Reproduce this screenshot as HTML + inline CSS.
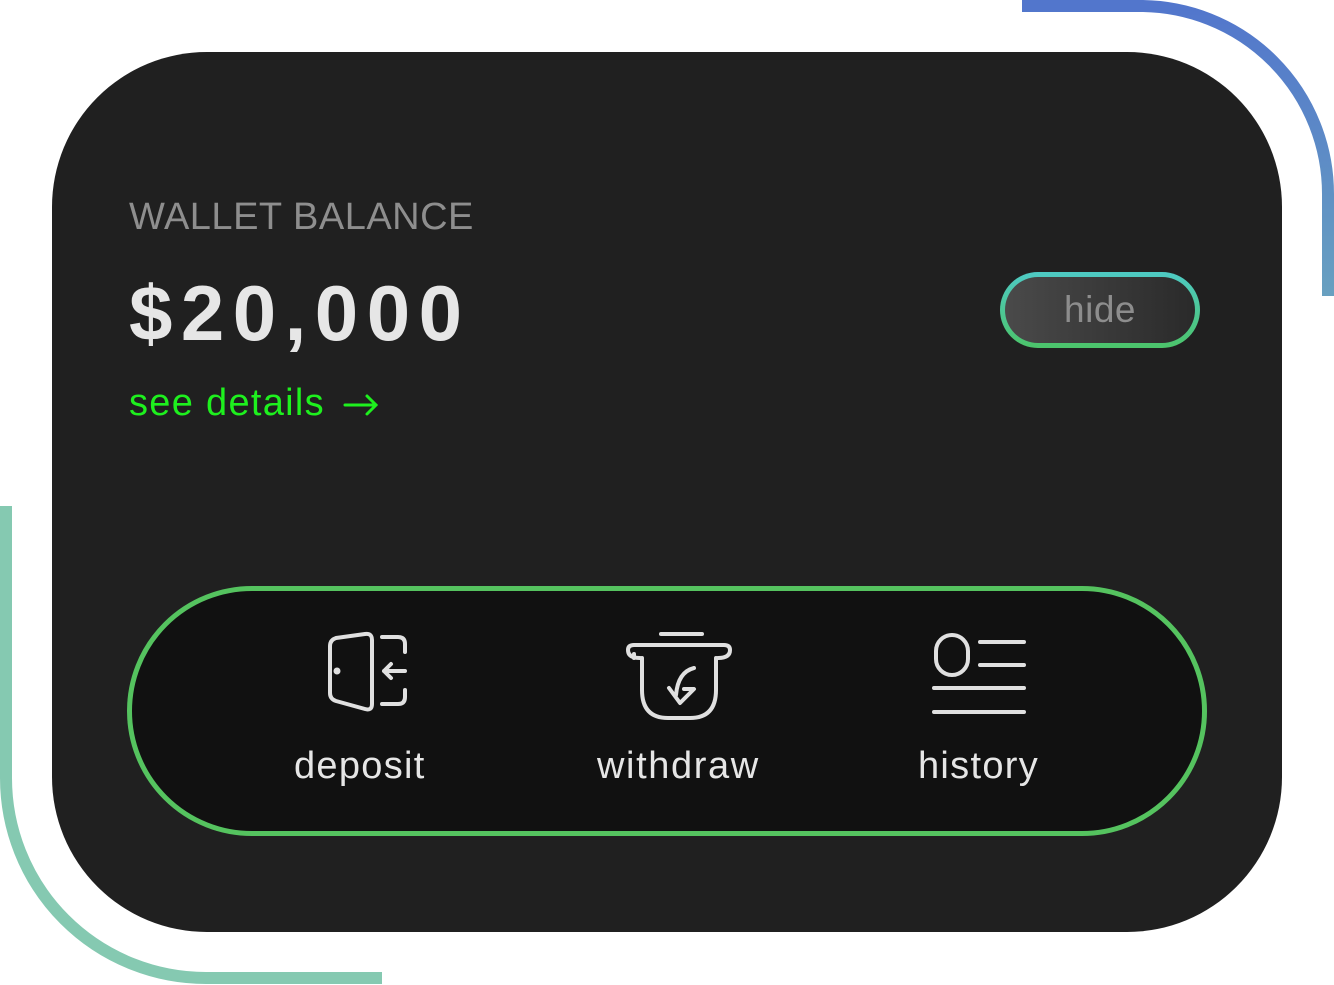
<!DOCTYPE html>
<html><head><meta charset="utf-8"><style>
html,body{margin:0;padding:0;background:#fff;width:1334px;height:985px;overflow:hidden;position:relative;font-family:"Liberation Sans",sans-serif}
.card{position:absolute;left:52px;top:52px;width:1230px;height:880px;background:#202020;border-radius:155px}
.t{position:absolute;white-space:nowrap}
.hide{position:absolute;left:1000px;top:272px;width:200px;height:76px;border-radius:40px;background:linear-gradient(180deg,#4ecac4,#4cc46a);}
.hide div{position:absolute;inset:5px;border-radius:34px;background:linear-gradient(90deg,#4a4a4a,#2a2a2a);color:#8d8d8d;font-size:37px;letter-spacing:0.5px;text-align:center;line-height:66px}
.pill{position:absolute;left:127px;top:586px;width:1070px;height:240px;border:5px solid #55c35f;border-radius:125px;background:#111}
</style></head><body>
<svg width="1334" height="985" style="position:absolute;left:0;top:0">
<defs><linearGradient id="bg" x1="0" y1="0" x2="0" y2="1"><stop offset="0" stop-color="#5276cc"/><stop offset="1" stop-color="#68a0c0"/></linearGradient></defs>
<path d="M1022 6 H1140 A188 188 0 0 1 1328 194 V296" fill="none" stroke="url(#bg)" stroke-width="12"/>
<path d="M6 506 V778 A200 200 0 0 0 206 978 H382" fill="none" stroke="#85c9b1" stroke-width="12"/>
</svg>
<div class="card"></div>
<div class="t" style="left:129px;top:196px;font-size:38px;color:#8e8e8e;letter-spacing:0.5px">WALLET BALANCE</div>
<div class="t" style="left:129px;top:268px;font-size:78px;font-weight:bold;color:#e6e6e6;letter-spacing:8.5px">$20,000</div>
<div class="t" style="left:129px;top:382px;font-size:38px;color:#1ef01e;letter-spacing:1.3px">see details</div>
<svg width="40" height="30" style="position:absolute;left:342px;top:390px" fill="none" stroke="#1ef01e" stroke-width="3" stroke-linecap="round"><path d="M3 15 H34 M25 6 L34 15 L25 24"/></svg>
<div class="hide"><div>hide</div></div>
<div class="pill"></div>
<svg width="1334" height="985" style="position:absolute;left:0;top:0" fill="none" stroke="#e0e0e0" stroke-width="4" stroke-linecap="round" stroke-linejoin="round">
<path d="M330 646 Q330 640 336 638 L365 634 Q372 633 372 640 V704 Q372 711 365 709 L336 701 Q330 699 330 693 Z"/>
<circle cx="337" cy="671" r="1.5" fill="#e0e0e0"/>
<path d="M382 637 H398 Q405 637 405 644 V652"/>
<path d="M382 704 H398 Q405 704 405 697 V690"/>
<path d="M405 671 H384 M391 664 L384 671 L391 678"/>
<path d="M661 634 H702"/>
<path d="M640 658 Q628 658 628 650 Q628 645 634 645 H724 Q730 645 730 650 Q730 658 718 658"/>
<path d="M634 658 V654"/>
<path d="M642 658 V690 Q642 718 668 718 H690 Q716 718 716 690 V658"/>
<path d="M694 668 Q678 672 676 695 M669 688 L680 703 L694 689 L684 689"/>
<rect x="936" y="635" width="32" height="40" rx="16"/>
<path d="M980 642 H1024 M980 665 H1024 M934 688 H1024 M934 712 H1024"/>
</svg>
<div class="t" style="left:294px;top:745px;font-size:38px;color:#e6e6e6;letter-spacing:1.3px">deposit</div>
<div class="t" style="left:597px;top:745px;font-size:38px;color:#e6e6e6;letter-spacing:1.6px">withdraw</div>
<div class="t" style="left:918px;top:745px;font-size:38px;color:#e6e6e6;letter-spacing:1.3px">history</div>
</body></html>
